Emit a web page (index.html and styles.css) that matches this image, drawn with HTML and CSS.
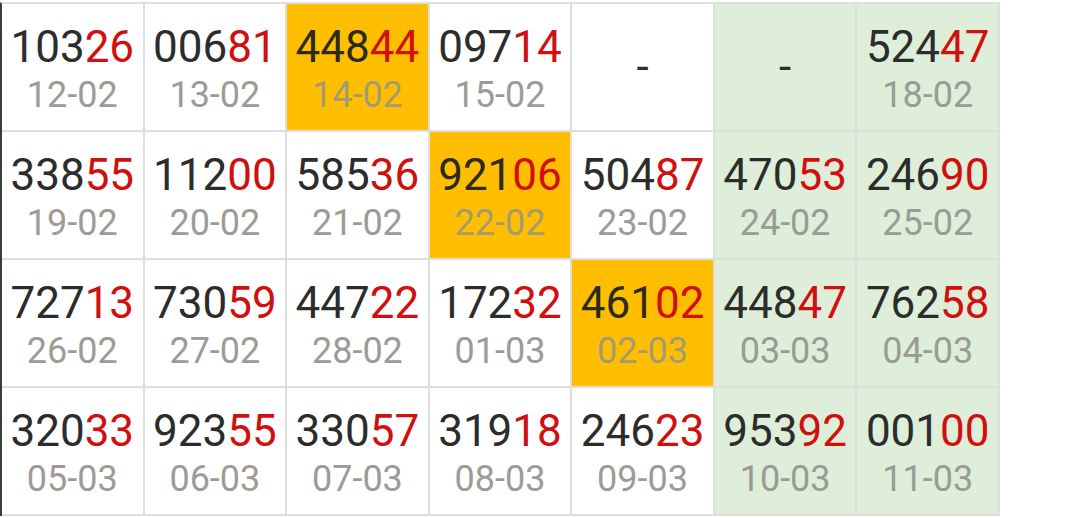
FILE: index.html
```html
<!doctype html>
<html>

<head>
    <meta name="viewport" content="width=device-width,initial-scale=1.0">
    <meta charset="utf-8" />
    <title>results</title>
    <link rel="stylesheet" href="styles.css">
</head>

<body>
    <div class="board">
        <div class="cell"><b>103<i>26</i></b><span>12-02</span></div>
        <div class="cell"><b>006<i>81</i></b><span>13-02</span></div>
        <div class="cell cell--hit"><b>448<i>44</i></b><span>14-02</span></div>
        <div class="cell"><b>097<i>14</i></b><span>15-02</span></div>
        <div class="cell cell--empty"><b>-</b></div>
        <div class="cell cell--weekend cell--empty"><b>-</b></div>
        <div class="cell cell--weekend"><b>524<i>47</i></b><span>18-02</span></div>

        <div class="cell"><b>338<i>55</i></b><span>19-02</span></div>
        <div class="cell"><b>112<i>00</i></b><span>20-02</span></div>
        <div class="cell"><b>585<i>36</i></b><span>21-02</span></div>
        <div class="cell cell--hit"><b>921<i>06</i></b><span>22-02</span></div>
        <div class="cell"><b>504<i>87</i></b><span>23-02</span></div>
        <div class="cell cell--weekend"><b>470<i>53</i></b><span>24-02</span></div>
        <div class="cell cell--weekend"><b>246<i>90</i></b><span>25-02</span></div>

        <div class="cell"><b>727<i>13</i></b><span>26-02</span></div>
        <div class="cell"><b>730<i>59</i></b><span>27-02</span></div>
        <div class="cell"><b>447<i>22</i></b><span>28-02</span></div>
        <div class="cell"><b>172<i>32</i></b><span>01-03</span></div>
        <div class="cell cell--hit"><b>461<i>02</i></b><span>02-03</span></div>
        <div class="cell cell--weekend"><b>448<i>47</i></b><span>03-03</span></div>
        <div class="cell cell--weekend"><b>762<i>58</i></b><span>04-03</span></div>

        <div class="cell"><b>320<i>33</i></b><span>05-03</span></div>
        <div class="cell"><b>923<i>55</i></b><span>06-03</span></div>
        <div class="cell"><b>330<i>57</i></b><span>07-03</span></div>
        <div class="cell"><b>319<i>18</i></b><span>08-03</span></div>
        <div class="cell"><b>246<i>23</i></b><span>09-03</span></div>
        <div class="cell cell--weekend"><b>953<i>92</i></b><span>10-03</span></div>
        <div class="cell cell--weekend"><b>001<i>00</i></b><span>11-03</span></div>
    </div>
</body>

</html>
```

FILE: styles.css
```css
html,
body {
    margin: 0;
    background: #fff;
}

.board {
    display: grid;
    grid-template-columns: repeat(7, 1fr);
    width: 1000px;
    box-sizing: border-box;
    margin-top: 2px;
    border-left: 2px solid #3a3a3a;
    border-top: 2px solid #dedede;
    font-family: Roboto, "Liberation Sans", sans-serif;
}

.cell {
    display: flex;
    flex-direction: column;
    align-items: center;
    height: 128px;
    padding-top: 19px;
    box-sizing: border-box;
    border-right: 2px solid #dedede;
    border-bottom: 2px solid #dedede;
    background: #fff;
}

.cell b {
    font-weight: 400;
    font-size: 44px;
    line-height: 48px;
    color: #2c2c2c;
}

.cell i {
    font-style: normal;
    color: #d0100f;
}

.cell span {
    margin-top: 4px;
    font-size: 36px;
    line-height: 40px;
    color: #9e9b96;
}

.cell--hit {
    background: #ffbf00;
}

.cell--hit b {
    color: #2b2a1c;
}

.cell--hit span {
    color: #a59a72;
}

.cell--weekend {
    background: #deeed9;
}

.cell--weekend span {
    color: #999b94;
}

.cell--empty {
    padding-top: 0;
    justify-content: center;
}
```
